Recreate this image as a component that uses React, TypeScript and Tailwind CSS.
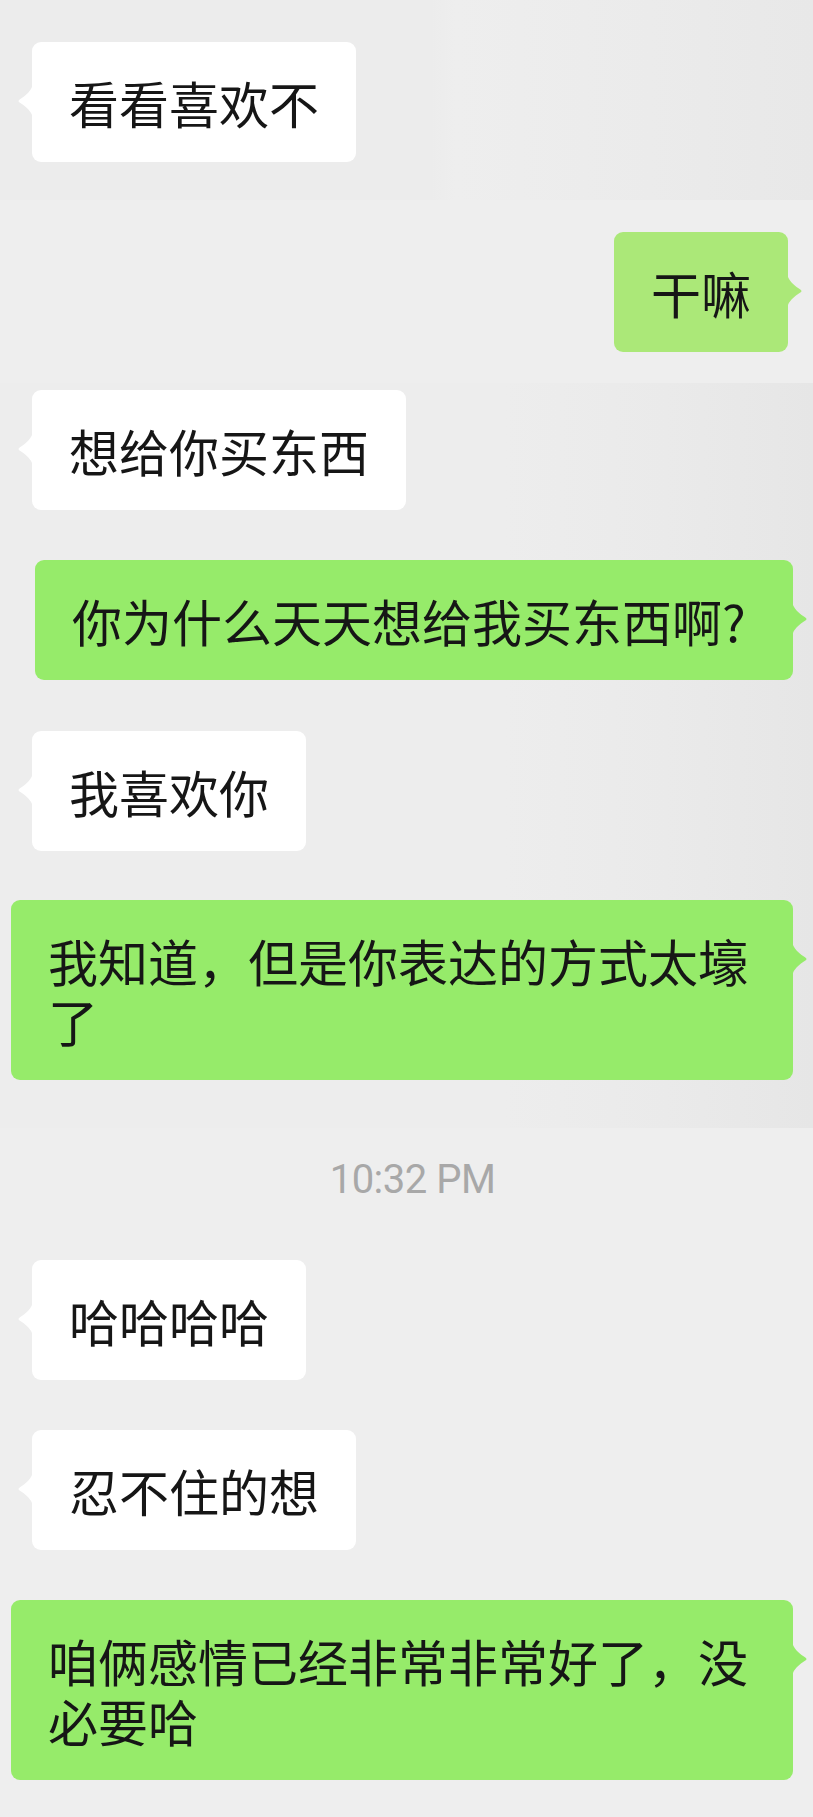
import React from "react";
import clsx from "clsx";

type Side = "left" | "right";

// little pointer on the side of a chat bubble
const Tail = ({ side, fill }: { side: Side; fill: string }) =>
  side === "left" ? (
    <svg
      className="absolute left-[-15px] top-[45px] h-[28px] w-[16px]"
      viewBox="0 0 16 28"
      fill={fill}
    >
      <path d="M16 0 L15 0 C13 5 8 9 3 12.2 Q0 14 3 15.8 C8 19 13 23 15 28 L16 28 Z" />
    </svg>
  ) : (
    <svg
      className="absolute right-[-15px] top-[45px] h-[28px] w-[16px]"
      viewBox="0 0 16 28"
      fill={fill}
    >
      <path d="M0 0 L1 0 C3 5 8 9 13 12.2 Q16 14 13 15.8 C8 19 3 23 1 28 L0 28 Z" />
    </svg>
  );

const Bubble = ({
  side,
  text,
  bg,
  fill,
  className,
  boxClass,
}: {
  side: Side;
  text: string;
  bg: string;
  fill: string;
  className?: string;
  boxClass?: string;
}) => (
  <div className={clsx("flex", side === "left" ? "justify-start" : "justify-end", className)}>
    <div
      className={clsx(
        "relative max-w-[782px] rounded-[9px] px-[37px] py-[30px] text-[50px] leading-[60px] text-[#161616]",
        bg,
        boxClass
      )}
    >
      {text}
      <Tail side={side} fill={fill} />
    </div>
  </div>
);

const Mine = (props: { text: string; className?: string; boxClass?: string }) => (
  <Bubble side="right" bg="bg-[#96eb6a]" fill="#96eb6a" {...props} />
);

const Theirs = (props: { text: string; className?: string }) => (
  <Bubble side="left" bg="bg-white" fill="#ffffff" {...props} />
);

export default function App() {
  return (
    <div className="h-[1817px] w-[813px] overflow-hidden bg-[#ededed] font-['Noto_Sans_CJK_SC','Noto_Sans',sans-serif]">
      {/* stitched screenshot pieces, each with its own slightly different backdrop */}
      <div className="h-[200px] bg-[linear-gradient(90deg,#ececec_0%,#ececec_53%,#eeeeee_56%,#ebebeb_80%,#e8e8e8_100%)] pt-[42px]">
        <Theirs text="看看喜欢不" className="pl-[32px]" />
      </div>

      <div className="h-[183px] bg-[#eeeeee] pt-[32px]">
        <Bubble
          side="right"
          text="干嘛"
          bg="bg-[#abe878]"
          fill="#abe878"
          className="pr-[25px]"
        />
      </div>

      <div className="bg-[linear-gradient(90deg,#ededed_0%,#ededed_62%,#eaeaea_82%,#e6e6e6_100%)] pb-[48px] pt-[7px]">
        <Theirs text="想给你买东西" className="pl-[32px]" />
        <Mine
          text="你为什么天天想给我买东西啊?"
          className="mt-[50px] pr-[20px]"
          boxClass="min-w-[758px]"
        />
        <Theirs text="我喜欢你" className="mt-[51px] pl-[32px]" />
        <Mine text="我知道，但是你表达的方式太壕了" className="mt-[49px] pr-[20px]" />
      </div>

      <div className="bg-[#eeeeee]">
        <div className="pl-[12px] pt-[28px] text-center font-['Roboto',sans-serif] text-[40px] leading-[48px] tracking-[-0.5px] text-[#a8a8a8]">
          10:32 PM
        </div>
        <Theirs text="哈哈哈哈" className="mt-[56px] pl-[32px]" />
        <Theirs text="忍不住的想" className="mt-[50px] pl-[32px]" />
        <Mine text="咱俩感情已经非常非常好了，没必要哈" className="mt-[50px] pb-[40px] pr-[20px]" />
      </div>
    </div>
  );
}
